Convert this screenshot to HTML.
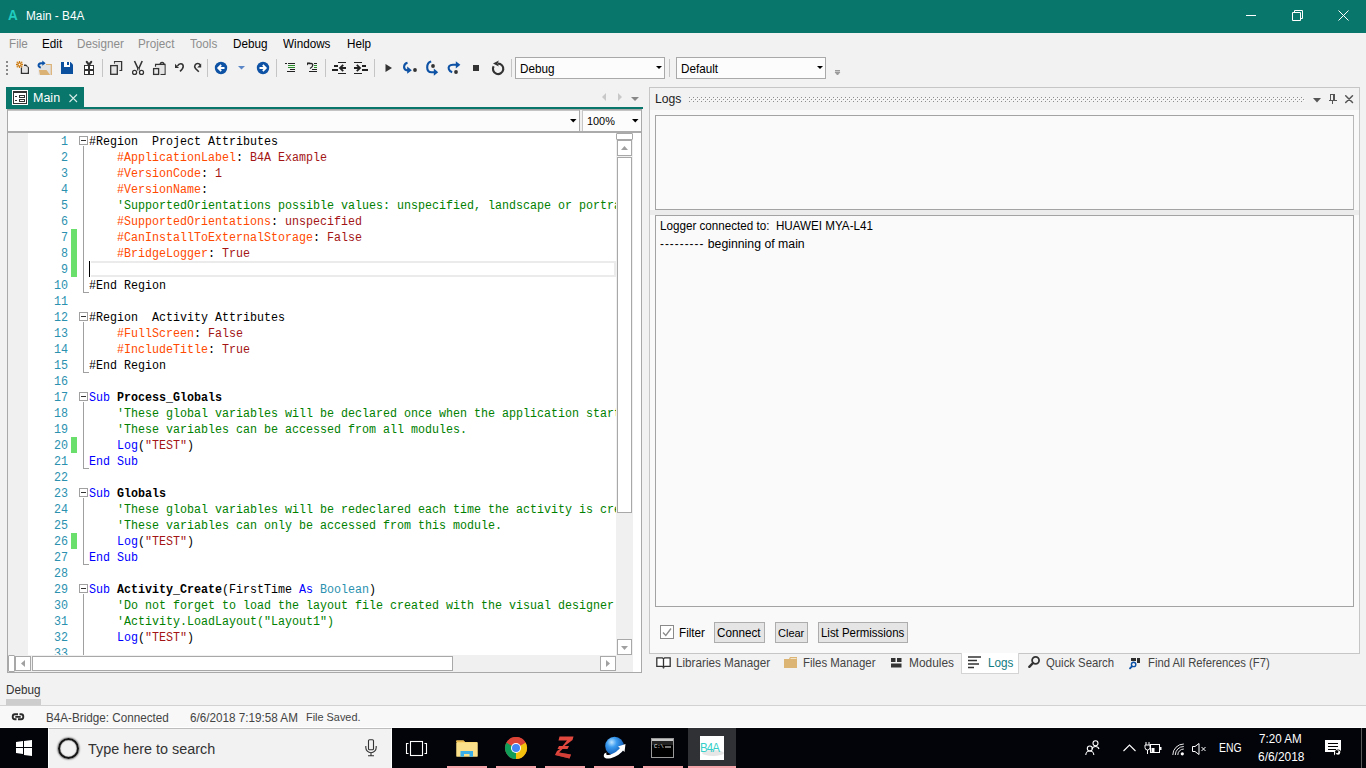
<!DOCTYPE html>
<html><head><meta charset="utf-8">
<style>
*{margin:0;padding:0;box-sizing:border-box}
html,body{width:1366px;height:768px;overflow:hidden;background:#f2f2f2;font-family:"Liberation Sans",sans-serif;}
.a{position:absolute}
.t{position:absolute;white-space:pre;line-height:1;font-size:11.7px;color:#000}
svg{position:absolute;overflow:visible}
#title{left:0;top:0;width:1366px;height:33px;background:#08766b}
.menu{color:#000}
.dis{color:#8d8d8d}
.sep{position:absolute;width:1px;top:59px;height:18px;background:#c5c5c5}
.combo{position:absolute;background:#fcfcfc;border:1px solid #a9a9a9}
/* editor */
#ed{left:7px;top:109px;width:635px;height:564px;border:1px solid #a9a9a9;border-top:1px solid #a9a9a9;background:#fff;overflow:hidden}
#code{position:absolute;left:81px;top:23px;width:564.6px;height:522px;overflow:hidden;transform:scaleX(0.93333);transform-origin:0 0}
.cl{position:absolute;left:0;height:16px;line-height:16px;white-space:pre;font-family:"Liberation Mono",monospace;font-size:12.5px;color:#000;padding-top:1px}
.ln{position:absolute;right:0;width:50px;text-align:right;height:16px;line-height:16px;font-family:"Liberation Mono",monospace;font-size:12.5px;color:#2b91af;padding-top:1px}
.k{color:#0000ff}.c{color:#008000}.d{color:#ff4a00}.s{color:#a31515}.b{font-weight:bold}.tp{color:#2b91af}
.t .c{color:#008000}
</style></head><body>
<!-- title bar -->
<div id="title" class="a"></div>
<div class="t" style="left:8px;top:7.5px;font-size:14.31px;transform:scaleX(0.9434);transform-origin:0 0;font-weight:bold;color:#20cdbf">A</div>
<div class="t" style="left:26px;top:10px;color:#fff;font-size:12.51px;transform:scaleX(0.9434);transform-origin:0 0">Main - B4A</div>
<div class="a" style="left:1246px;top:15px;width:10px;height:1px;background:#fff"></div>
<svg style="left:1292px;top:10px" width="11" height="11"><path d="M0.5 2.5h8v8h-8z M2.5 2.5v-2h8v8h-2" fill="none" stroke="#fff" stroke-width="1"/></svg>
<svg style="left:1338px;top:10px" width="11" height="11"><path d="M0.5 0.5L10.5 10.5M10.5 0.5L0.5 10.5" stroke="#fff" stroke-width="1"/></svg>

<!-- menu -->
<div class="t dis" style="font-size:12.40px;transform:scaleX(0.9434);transform-origin:0 0;left:9px;top:38px">File</div>
<div class="t menu" style="font-size:12.40px;transform:scaleX(0.9434);transform-origin:0 0;left:42px;top:38px">Edit</div>
<div class="t dis" style="font-size:12.40px;transform:scaleX(0.9434);transform-origin:0 0;left:77px;top:38px">Designer</div>
<div class="t dis" style="font-size:12.40px;transform:scaleX(0.9434);transform-origin:0 0;left:138px;top:38px">Project</div>
<div class="t dis" style="font-size:12.40px;transform:scaleX(0.9434);transform-origin:0 0;left:190px;top:38px">Tools</div>
<div class="t menu" style="font-size:12.40px;transform:scaleX(0.9434);transform-origin:0 0;left:233px;top:38px">Debug</div>
<div class="t menu" style="font-size:12.40px;transform:scaleX(0.9434);transform-origin:0 0;left:283px;top:38px">Windows</div>
<div class="t menu" style="font-size:12.40px;transform:scaleX(0.9434);transform-origin:0 0;left:347px;top:38px">Help</div>

<!-- toolbar -->

<div class="a" style="left:6px;top:61px;width:2px;height:2px;background:#8a8a8a"></div>
<div class="a" style="left:6px;top:65px;width:2px;height:2px;background:#8a8a8a"></div>
<div class="a" style="left:6px;top:69px;width:2px;height:2px;background:#8a8a8a"></div>
<div class="a" style="left:6px;top:73px;width:2px;height:2px;background:#8a8a8a"></div>
<!-- new/open/save/gift/copy/cut/paste/undo/redo -->
<svg style="left:0;top:0" width="210" height="80">
<path d="M21.5 67.5V73.3H28.3V67.8L25.8 65.3H24" stroke="#333" stroke-width="1.4" fill="#e4e4e4"/>
<rect x="22.2" y="66.5" width="5.4" height="6.1" fill="#e4e4e4"/>
<path d="M19.5 61v7M16 64.5h7" stroke="#cc7a10" stroke-width="1.3"/>
<circle cx="17.3" cy="62.3" r="0.8" fill="#cc7a10"/><circle cx="21.7" cy="62.3" r="0.8" fill="#cc7a10"/><circle cx="17.3" cy="66.7" r="0.8" fill="#cc7a10"/><circle cx="21.7" cy="66.7" r="0.8" fill="#cc7a10"/>
<circle cx="19.5" cy="64.5" r="1.6" fill="#fff" stroke="#cc7a10" stroke-width="1.2"/>
<rect x="38.5" y="64.3" width="13" height="10.6" fill="#e2e2e2"/>
<path d="M46 64.5H51.3V74.9" stroke="#dcb174" stroke-width="1.2" fill="none"/>
<path d="M39 70H46.5L50.2 74.9H40z" fill="#dcb174"/>
<path d="M40.8 67.6C37.8 67 37.6 63.6 41 63.2L43 63.2" stroke="#0b52a8" stroke-width="1.9" fill="none"/>
<path d="M42.3 60.6L45.6 63.2L42.3 65.8z" fill="#0b52a8"/>
<path d="M61 62H70.5L73 64.5V74H61z" fill="#0b4f9f"/>
<rect x="64" y="62" width="6" height="5" fill="#fff"/>
<rect x="67" y="62" width="2" height="3" fill="#0b4f9f"/>
<rect x="84" y="65" width="10" height="10" fill="#333"/>
<rect x="85" y="66" width="3" height="3" fill="#fff"/><rect x="90" y="66" width="3" height="3" fill="#fff"/>
<rect x="85" y="71" width="3" height="3" fill="#fff"/><rect x="90" y="71" width="3" height="3" fill="#fff"/>
<path d="M89 64.8L86.8 61.8M89 64.8L91.2 61.8" stroke="#333" stroke-width="2.2" stroke-linecap="round"/>
<path d="M114.6 63.8V61.6H121.6V70.4H119.4" stroke="#333" stroke-width="1.3" fill="none"/>
<rect x="114.8" y="62.2" width="6.2" height="7.6" fill="#e4e4e4"/>
<rect x="110.7" y="65.6" width="6.6" height="8.7" fill="#e4e4e4" stroke="#333" stroke-width="1.3"/>
<path d="M134.5 61L138 68.5M142.2 61L138.8 68.5" stroke="#333" stroke-width="1.6"/>
<path d="M137.6 68v2.5M139.2 68v2.5" stroke="#333" stroke-width="1"/>
<circle cx="134.6" cy="72.4" r="2" fill="#fff" stroke="#333" stroke-width="1.3"/>
<circle cx="141.5" cy="72.4" r="2" fill="#fff" stroke="#333" stroke-width="1.3"/>
<path d="M155.6 66.8V64.5H165V74.4H160.5" stroke="#333" stroke-width="1.3" fill="none"/>
<rect x="156.2" y="65.1" width="8.2" height="8.7" fill="#e4e4e4"/>
<path d="M160.3 64.3A1.8 1.8 0 0 1 163.9 64.3" stroke="#333" stroke-width="1.5" fill="none"/>
<rect x="153.6" y="68.6" width="5" height="5.8" fill="#ececec" stroke="#333" stroke-width="1.3"/>
<path d="M177.5 66C179 63 183.2 63 183.2 66.5C183.2 68.5 181.5 70 180 71.3" stroke="#333" stroke-width="1.6" fill="none"/>
<path d="M175 63.8V67.9H179z" fill="#333"/>
<path d="M198.8 71.8L195.5 68.5C193.5 66 195.5 63.5 197.8 63.5C199 63.5 199.8 64.2 200.3 65" stroke="#333" stroke-width="1.6" fill="none"/>
<path d="M201.2 63.5V67.6H197.2z" fill="#333"/>
</svg>
<div class="sep" style="left:102px"></div>
<div class="sep" style="left:207px"></div>
<!-- back -->
<svg style="left:214px;top:61px" width="14" height="14"><circle cx="7" cy="7" r="6.2" fill="#0d52a4"/><path d="M10.5 7h-6M7.2 4l-3 3l3 3" stroke="#fff" stroke-width="1.8" fill="none"/></svg>
<svg style="left:238px;top:66px" width="7" height="4"><path d="M0 0h7L3.5 3.5z" fill="#5a86c8"/></svg>
<!-- forward -->
<svg style="left:256px;top:61px" width="14" height="14"><circle cx="7" cy="7" r="6.2" fill="#0d52a4"/><path d="M3.5 7h6M6.8 4l3 3l-3 3" stroke="#fff" stroke-width="1.8" fill="none"/></svg>
<div class="sep" style="left:276px"></div>
<!-- comment / uncomment / outdent / indent -->
<svg style="left:0;top:0" width="380" height="80" shape-rendering="crispEdges">
<rect x="285" y="63" width="2" height="1.3" fill="#222"/>
<rect x="288" y="63" width="7" height="1.3" fill="#222"/>
<rect x="288" y="65" width="7" height="1.3" fill="#2a8f2a"/>
<rect x="288" y="67" width="7" height="1.3" fill="#2a8f2a"/>
<rect x="290" y="69" width="5" height="1.3" fill="#222"/>
<rect x="287" y="71" width="8" height="1.3" fill="#222"/>
<rect x="314" y="63" width="3" height="1.3" fill="#222"/>
<rect x="314" y="65" width="3" height="1.3" fill="#2a8f2a"/>
<rect x="314" y="67" width="3" height="1.3" fill="#2a8f2a"/>
<rect x="312" y="69" width="5" height="1.3" fill="#222"/>
<rect x="309" y="71" width="8" height="1.3" fill="#222"/>
</svg>
<svg style="left:0;top:0" width="380" height="80">
<path d="M308.5 63.5H311C313.5 63.5 313.5 66.5 310 68.5" stroke="#222" stroke-width="1.3" fill="none"/>
<path d="M307 62.5L310 62.5L307 65.5z" fill="#222"/>
</svg>
<svg style="left:0;top:0" width="380" height="80" shape-rendering="crispEdges">
<rect x="338" y="62" width="8" height="1.2" fill="#222"/>
<rect x="334" y="65" width="4" height="2" fill="#222"/>
<rect x="332" y="69" width="6" height="2" fill="#222"/>
<rect x="340" y="67" width="6" height="2" fill="#222"/>
<rect x="338" y="73" width="8" height="1.2" fill="#222"/>
<rect x="354" y="62" width="8" height="1.2" fill="#222"/>
<rect x="362" y="65" width="4" height="2" fill="#222"/>
<rect x="362" y="69" width="6" height="2" fill="#222"/>
<rect x="354" y="67" width="6" height="2" fill="#222"/>
<rect x="354" y="73" width="8" height="1.2" fill="#222"/>
</svg>
<svg style="left:0;top:0" width="380" height="80">
<path d="M343.2 64.8L340 68L343.2 71.2" stroke="#222" stroke-width="1.8" fill="none"/>
<path d="M356.8 64.8L360 68L356.8 71.2" stroke="#222" stroke-width="1.8" fill="none"/>
</svg>
<div class="sep" style="left:325px"></div>
<div class="sep" style="left:374px"></div>
<!-- play -->
<svg style="left:385px;top:63px" width="8" height="10"><path d="M0.5 1l6.5 4l-6.5 4z" fill="#333"/></svg>
<!-- step over / into / out -->
<svg style="left:0;top:0" width="500" height="80">
<path d="M407.5 62.8C403.5 63.8 402.8 68.6 406.5 70.3L409 70.3" stroke="#0d52a4" stroke-width="2.1" fill="none"/>
<path d="M407.2 66.6L411.8 70.2L407.2 73.8z" fill="#0d52a4"/>
<circle cx="415" cy="70" r="1.9" fill="#333"/>
<path d="M431.2 61.6C427.6 62.4 427.2 65.5 427.2 67.5C427.2 70.5 428.6 72.2 431.5 72.2L435 72.2" stroke="#0d52a4" stroke-width="2.1" fill="none"/>
<path d="M433.8 68.6L438.2 72.2L433.8 75.8z" fill="#0d52a4"/>
<circle cx="433" cy="66" r="1.9" fill="#333"/>
<path d="M452.2 72.3C448.6 71.2 448 67.8 449.2 66.2C450.2 64.9 451.5 64.8 453 64.8L457 64.8" stroke="#0d52a4" stroke-width="2.1" fill="none"/>
<path d="M455.8 61.2L460.4 64.8L455.8 68.4z" fill="#0d52a4"/>
<circle cx="456" cy="72" r="1.9" fill="#333"/>
</svg>
<!-- stop -->
<div class="a" style="left:473px;top:65px;width:6px;height:6px;background:#333"></div>
<!-- restart -->
<svg style="left:0;top:0" width="520" height="80"><path d="M493.6 66.2A5.2 5.2 0 1 0 498 63.6" stroke="#333" stroke-width="2.2" fill="none"/><path d="M493 63.4L498.8 60.4L497.6 63.6L498.8 66.6z" fill="#333"/></svg>
<div class="sep" style="left:511px"></div>

<div class="combo" style="left:515px;top:57px;width:150px;height:22px"></div>
<div class="t" style="font-size:12.40px;transform:scaleX(0.9434);transform-origin:0 0;left:520px;top:63px">Debug</div>
<svg style="left:656px;top:66px" width="6" height="4"><path d="M0 0h6L3 3z" fill="#000"/></svg>
<div class="sep" style="left:669px"></div>
<div class="combo" style="left:676px;top:57px;width:150px;height:22px"></div>
<div class="t" style="font-size:12.40px;transform:scaleX(0.9434);transform-origin:0 0;left:681px;top:63px">Default</div>
<svg style="left:817px;top:66px" width="6" height="4"><path d="M0 0h6L3 3z" fill="#000"/></svg>
<svg style="left:835px;top:70px" width="6" height="6"><path d="M0 0.5h5M0 2h5L2.5 5z" stroke="#9a9a9a" stroke-width="1" fill="#9a9a9a"/></svg>

<!-- document tab -->
<div class="a" style="left:6px;top:87px;width:78px;height:20px;background:#08766b"></div>
<div class="a" style="left:6px;top:107px;width:637px;height:2px;background:#08766b"></div>
<svg style="left:12px;top:90px" width="16" height="15"><rect x="0" y="0" width="16" height="15" fill="#fff"/><rect x="1" y="1" width="14" height="13" fill="#333"/><rect x="2" y="3" width="12" height="10" fill="#fff"/><rect x="3" y="6" width="2" height="1" fill="#333"/><rect x="3" y="10" width="2" height="1" fill="#333"/><rect x="7.5" y="5.5" width="5" height="2" fill="none" stroke="#333" stroke-width="1"/><rect x="7.5" y="9.5" width="5" height="2" fill="none" stroke="#333" stroke-width="1"/></svg>
<div class="t" style="left:33px;top:91px;color:#fff;font-size:13.25px;transform:scaleX(0.9434);transform-origin:0 0">Main</div>
<svg style="left:69px;top:94px" width="9" height="9"><path d="M0.5 0.5L8 8M8 0.5L0.5 8" stroke="#d6ece8" stroke-width="1.1"/></svg>
<svg style="left:601px;top:93px" width="6" height="9"><path d="M5 0v8L1 4z" fill="#c8c8c8"/></svg>
<svg style="left:617px;top:93px" width="6" height="9"><path d="M1 0v8L5 4z" fill="#c8c8c8"/></svg>
<svg style="left:631px;top:97px" width="9" height="5"><path d="M0 0h8L4 4z" fill="#888"/></svg>

<!-- editor -->
<div id="ed" class="a">
  <!-- header combos -->
  <div class="a" style="left:0;top:0;width:571px;height:21px;background:#fcfcfc"></div>
  <div class="a" style="left:574px;top:0;width:59px;height:21px;background:#fcfcfc;border-left:1px solid #c6c6c6"></div>
  <div class="a" style="left:0;top:21px;width:633px;height:2px;background:#ababab"></div>
  <div class="a" style="left:0;top:0;width:633px;height:1px;background:#c4c4c4"></div>
  <div class="a" style="left:571px;top:0;width:1px;height:21px;background:#a9a9a9"></div>
  <div class="a" style="left:572px;top:0;width:2px;height:21px;background:#f0f0f0"></div>
  <svg style="left:562px;top:9px" width="7" height="4"><path d="M0 0h6.5L3.25 3.5z" fill="#000"/></svg>
  <div class="t" style="left:579px;top:6px;font-size:11.55px;transform:scaleX(0.9434);transform-origin:0 0">100%</div>
  <svg style="left:624px;top:9px" width="7" height="4"><path d="M0 0h6.5L3.25 3.5z" fill="#000"/></svg>
  <!-- gutter -->
  <div class="a" style="left:0;top:23px;width:20px;height:522px;background:#f0f0f0"></div>
  <div class="a" style="left:0;top:23px;width:60px;height:522px;overflow:hidden;transform:scaleX(0.93333);transform-origin:100% 0"><div class="ln" style="top:0px">1</div>
<div class="ln" style="top:16px">2</div>
<div class="ln" style="top:32px">3</div>
<div class="ln" style="top:48px">4</div>
<div class="ln" style="top:64px">5</div>
<div class="ln" style="top:80px">6</div>
<div class="ln" style="top:96px">7</div>
<div class="ln" style="top:112px">8</div>
<div class="ln" style="top:128px">9</div>
<div class="ln" style="top:144px">10</div>
<div class="ln" style="top:160px">11</div>
<div class="ln" style="top:176px">12</div>
<div class="ln" style="top:192px">13</div>
<div class="ln" style="top:208px">14</div>
<div class="ln" style="top:224px">15</div>
<div class="ln" style="top:240px">16</div>
<div class="ln" style="top:256px">17</div>
<div class="ln" style="top:272px">18</div>
<div class="ln" style="top:288px">19</div>
<div class="ln" style="top:304px">20</div>
<div class="ln" style="top:320px">21</div>
<div class="ln" style="top:336px">22</div>
<div class="ln" style="top:352px">23</div>
<div class="ln" style="top:368px">24</div>
<div class="ln" style="top:384px">25</div>
<div class="ln" style="top:400px">26</div>
<div class="ln" style="top:416px">27</div>
<div class="ln" style="top:432px">28</div>
<div class="ln" style="top:448px">29</div>
<div class="ln" style="top:464px">30</div>
<div class="ln" style="top:480px">31</div>
<div class="ln" style="top:496px">32</div>
<div class="ln" style="top:512px">33</div></div>
  <!-- change bars -->
  <div class="a" style="left:63px;top:119px;width:6px;height:48px;background:#6bdf6b"></div>
  <div class="a" style="left:63px;top:327px;width:6px;height:16px;background:#6bdf6b"></div>
  <div class="a" style="left:63px;top:423px;width:6px;height:16px;background:#6bdf6b"></div>
  <div class="a" style="left:71px;top:26px;width:9px;height:9px;border:1px solid #a0a0a0;background:#fff"></div><div class="a" style="left:73px;top:30px;width:5px;height:1px;background:#333"></div>
<div class="a" style="left:75px;top:36px;width:1px;height:146px;background:#a0a0a0"></div><div class="a" style="left:75px;top:182px;width:6px;height:1px;background:#a0a0a0"></div>
<div class="a" style="left:71px;top:202px;width:9px;height:9px;border:1px solid #a0a0a0;background:#fff"></div><div class="a" style="left:73px;top:206px;width:5px;height:1px;background:#333"></div>
<div class="a" style="left:75px;top:212px;width:1px;height:50px;background:#a0a0a0"></div><div class="a" style="left:75px;top:262px;width:6px;height:1px;background:#a0a0a0"></div>
<div class="a" style="left:71px;top:282px;width:9px;height:9px;border:1px solid #a0a0a0;background:#fff"></div><div class="a" style="left:73px;top:286px;width:5px;height:1px;background:#333"></div>
<div class="a" style="left:75px;top:292px;width:1px;height:66px;background:#a0a0a0"></div><div class="a" style="left:75px;top:358px;width:6px;height:1px;background:#a0a0a0"></div>
<div class="a" style="left:71px;top:378px;width:9px;height:9px;border:1px solid #a0a0a0;background:#fff"></div><div class="a" style="left:73px;top:382px;width:5px;height:1px;background:#333"></div>
<div class="a" style="left:75px;top:388px;width:1px;height:66px;background:#a0a0a0"></div><div class="a" style="left:75px;top:454px;width:6px;height:1px;background:#a0a0a0"></div>
<div class="a" style="left:71px;top:474px;width:9px;height:9px;border:1px solid #a0a0a0;background:#fff"></div><div class="a" style="left:73px;top:478px;width:5px;height:1px;background:#333"></div>
<div class="a" style="left:75px;top:484px;width:1px;height:61px;background:#a0a0a0"></div>
  <!-- current line -->
  <div class="a" style="left:83px;top:151px;width:525px;height:16px;border:2px solid #ebebeb;border-left:none"></div>
  <div class="a" style="left:81px;top:151px;width:1px;height:16px;background:#000"></div>
  <div id="code"><div class="cl" style="top:0px">#Region  Project Attributes</div>
<div class="cl" style="top:16px">    <span class="d">#ApplicationLabel</span>: <span class="s">B4A Example</span></div>
<div class="cl" style="top:32px">    <span class="d">#VersionCode</span>: <span class="s">1</span></div>
<div class="cl" style="top:48px">    <span class="d">#VersionName</span>: </div>
<div class="cl" style="top:64px">    <span class="c">&#x27;SupportedOrientations possible values: unspecified, landscape or portrait.</span></div>
<div class="cl" style="top:80px">    <span class="d">#SupportedOrientations</span>: <span class="s">unspecified</span></div>
<div class="cl" style="top:96px">    <span class="d">#CanInstallToExternalStorage</span>: <span class="s">False</span></div>
<div class="cl" style="top:112px">    <span class="d">#BridgeLogger</span>: <span class="s">True</span></div>
<div class="cl" style="top:128px"></div>
<div class="cl" style="top:144px">#End Region</div>
<div class="cl" style="top:160px"></div>
<div class="cl" style="top:176px">#Region  Activity Attributes</div>
<div class="cl" style="top:192px">    <span class="d">#FullScreen</span>: <span class="s">False</span></div>
<div class="cl" style="top:208px">    <span class="d">#IncludeTitle</span>: <span class="s">True</span></div>
<div class="cl" style="top:224px">#End Region</div>
<div class="cl" style="top:240px"></div>
<div class="cl" style="top:256px"><span class="k">Sub</span> <span class="b">Process_Globals</span></div>
<div class="cl" style="top:272px">    <span class="c">&#x27;These global variables will be declared once when the application starts.</span></div>
<div class="cl" style="top:288px">    <span class="c">&#x27;These variables can be accessed from all modules.</span></div>
<div class="cl" style="top:304px">    <span class="k">Log</span>(<span class="s">&quot;TEST&quot;</span>)</div>
<div class="cl" style="top:320px"><span class="k">End Sub</span></div>
<div class="cl" style="top:336px"></div>
<div class="cl" style="top:352px"><span class="k">Sub</span> <span class="b">Globals</span></div>
<div class="cl" style="top:368px">    <span class="c">&#x27;These global variables will be redeclared each time the activity is created.</span></div>
<div class="cl" style="top:384px">    <span class="c">&#x27;These variables can only be accessed from this module.</span></div>
<div class="cl" style="top:400px">    <span class="k">Log</span>(<span class="s">&quot;TEST&quot;</span>)</div>
<div class="cl" style="top:416px"><span class="k">End Sub</span></div>
<div class="cl" style="top:432px"></div>
<div class="cl" style="top:448px"><span class="k">Sub</span> <span class="b">Activity_Create</span>(FirstTime <span class="k">As</span> <span class="tp">Boolean</span>)</div>
<div class="cl" style="top:464px">    <span class="c">&#x27;Do not forget to load the layout file created with the visual designer. For example:</span></div>
<div class="cl" style="top:480px">    <span class="c">&#x27;Activity.LoadLayout(&quot;Layout1&quot;)</span></div>
<div class="cl" style="top:496px">    <span class="k">Log</span>(<span class="s">&quot;TEST&quot;</span>)</div>
<div class="cl" style="top:512px"></div></div>
  <!-- vertical scrollbar -->
  <div class="a" style="left:608px;top:23px;width:17px;height:539px;background:#f0f0f0"></div>
  <div class="a" style="left:608px;top:23px;width:17px;height:7px;background:#fff;border:1px solid #a8a8a8;border-radius:1px"></div>
  <div class="a" style="left:609px;top:30px;width:15px;height:16px;background:#fff;border:1px solid #a8a8a8"></div>
  <svg style="left:613px;top:36px" width="7" height="4"><path d="M0 4h7L3.5 0z" fill="#a0a0a0"/></svg>
  <div class="a" style="left:609px;top:47px;width:15px;height:356px;background:#fff;border:1px solid #a8a8a8"></div>
  <div class="a" style="left:609px;top:529px;width:15px;height:16px;background:#fff;border:1px solid #a8a8a8"></div>
  <svg style="left:613px;top:536px" width="7" height="4"><path d="M0 0h7L3.5 4z" fill="#a0a0a0"/></svg>
  <!-- horizontal scrollbar -->
  <div class="a" style="left:0;top:545px;width:608px;height:17px;background:#f0f0f0"></div>
  <div class="a" style="left:0;top:545px;width:7px;height:17px;background:#fff;border:1px solid #a8a8a8;border-radius:1px"></div>
  <div class="a" style="left:7px;top:546px;width:16px;height:15px;background:#fff;border:1px solid #a8a8a8"></div>
  <svg style="left:13px;top:550px" width="4" height="7"><path d="M4 0v7L0 3.5z" fill="#a0a0a0"/></svg>
  <div class="a" style="left:24px;top:546px;width:421px;height:15px;background:#fff;border:1px solid #a8a8a8"></div>
  <div class="a" style="left:592px;top:546px;width:16px;height:15px;background:#fff;border:1px solid #a8a8a8"></div>
  <svg style="left:598px;top:550px" width="4" height="7"><path d="M0 0v7L4 3.5z" fill="#a0a0a0"/></svg>
</div>

<!-- logs panel -->
<div class="a" style="left:649px;top:87px;width:711px;height:567px;background:#f9f9f9;border:1px solid #c6c6c6"></div>
<div class="a" style="left:650px;top:88px;width:709px;height:22px;background:#f2f2f2"></div>
<div class="t" style="left:655px;top:93px;font-size:12.93px;transform:scaleX(0.9434);transform-origin:0 0;color:#222">Logs</div>
<svg style="left:689px;top:97px" width="616" height="5"><defs><pattern id="dp" x="0" y="0" width="4" height="4" patternUnits="userSpaceOnUse"><rect x="0" y="0" width="1" height="1" fill="#8e8e8e"/><rect x="2" y="2" width="1" height="1" fill="#8e8e8e"/><rect x="1" y="1" width="1" height="1" fill="#fbfbfb"/><rect x="3" y="3" width="1" height="1" fill="#fbfbfb"/></pattern></defs><rect x="0" y="0" width="616" height="5" fill="url(#dp)"/></svg>
<svg style="left:1313px;top:98px" width="9" height="5"><path d="M0 0h8L4 4.5z" fill="#555"/></svg>
<svg style="left:1329px;top:94px" width="8" height="10"><rect x="1" y="0" width="5" height="1" fill="#555"/><rect x="1" y="0" width="1" height="7" fill="#555"/><rect x="4" y="0" width="2" height="7" fill="#555"/><rect x="0" y="6" width="8" height="1" fill="#555"/><rect x="3" y="7" width="1" height="3" fill="#555"/></svg>
<svg style="left:1345px;top:95px" width="9" height="9"><path d="M0.7 0.7L7.5 7.5M7.5 0.7L0.7 7.5" stroke="#555" stroke-width="1.5" stroke-linecap="round"/></svg>
<div class="a" style="left:655px;top:115px;width:699px;height:95px;background:#fafafa;border:1px solid #a3a3a3;border-right-color:#b8b8b8"></div>
<div class="a" style="left:650px;top:210px;width:709px;height:5px;background:#ececec"></div>
<div class="a" style="left:655px;top:215px;width:699px;height:392px;background:#fafafa;border:1px solid #a3a3a3"></div>
<div class="t" style="left:660px;top:220px;font-size:12.35px;transform:scaleX(0.9434);transform-origin:0 0">Logger connected to:  HUAWEI MYA-L41</div>
<div class="t" style="left:660px;top:237px;font-size:12.35px;transform:scaleX(0.9434);transform-origin:0 0"><span style="letter-spacing:0.09em">---------</span><span style="font-size:1.0558em"> beginning of main</span></div>
<!-- filter row -->
<div class="a" style="left:660px;top:625px;width:14px;height:14px;background:#fff;border:1px solid #8a8a8a"></div>
<svg style="left:662px;top:628px" width="10" height="9"><path d="M1 4.5L3.8 7.5L9 0.5" stroke="#8a8a8a" stroke-width="1.3" fill="none"/></svg>
<div class="t" style="font-size:12.40px;transform:scaleX(0.9434);transform-origin:0 0;left:679px;top:627px">Filter</div>
<div class="a" style="left:714px;top:622px;width:51px;height:21px;background:#e5e5e5;border:1px solid #adadad"></div>
<div class="t" style="font-size:12.40px;transform:scaleX(0.9434);transform-origin:0 0;left:717px;top:627px">Connect</div>
<div class="a" style="left:775px;top:622px;width:33px;height:21px;background:#e5e5e5;border:1px solid #adadad"></div>
<div class="t" style="left:778px;top:626.5px;font-size:11.66px;transform:scaleX(0.9434);transform-origin:0 0">Clear</div>
<div class="a" style="left:818px;top:622px;width:90px;height:21px;background:#e5e5e5;border:1px solid #adadad"></div>
<div class="t" style="left:821px;top:627px;font-size:12.14px;transform:scaleX(0.9434);transform-origin:0 0">List Permissions</div>

<!-- bottom tabs -->

<div class="a" style="left:961px;top:653px;width:58px;height:21px;background:#fff;border:1px solid #d4d4d4;border-top:none"></div>
<svg style="left:656px;top:657px" width="15" height="11"><path d="M0.8 0.8h5.5l1.2 1v8.4l-1.2 -0.8h-5.5z M14.2 0.8h-5.5l-1.2 1v8.4l1.2 -0.8h5.5z" fill="#fff" stroke="#333" stroke-width="1.3"/></svg>
<div class="t" style="font-size:12.40px;transform:scaleX(0.9434);transform-origin:0 0;left:676px;top:657px;color:#444">Libraries Manager</div>
<svg style="left:784px;top:657px" width="14" height="12"><path d="M0 2H5L6 0H13V11H0z" fill="#dcb474"/><rect x="6.5" y="1" width="6" height="1" fill="#f3e3c6"/></svg>
<div class="t" style="left:803px;top:657px;color:#444;font-size:12.14px;transform:scaleX(0.9434);transform-origin:0 0">Files Manager</div>
<svg style="left:891px;top:658px" width="11" height="10"><rect x="0" y="0" width="4.5" height="4" fill="#333"/><rect x="6" y="0" width="4.5" height="4" fill="#333"/><rect x="0" y="5.5" width="10.5" height="4" fill="#333"/></svg>
<div class="t" style="left:909px;top:657px;color:#444;font-size:12.61px;transform:scaleX(0.9434);transform-origin:0 0">Modules</div>
<svg style="left:968px;top:656px" width="14" height="14"><path d="M0 1h13M0 4.5h9M0 8h11M0 11.5h6" stroke="#333" stroke-width="1.6"/></svg>
<div class="t" style="font-size:12.40px;transform:scaleX(0.9434);transform-origin:0 0;left:988px;top:657px;color:#117c82">Logs</div>
<svg style="left:1020px;top:652px" width="26" height="20"><circle cx="15.6" cy="8.3" r="3.5" fill="none" stroke="#333" stroke-width="1.8"/><path d="M13 11L9.3 14.8" stroke="#333" stroke-width="2.4" stroke-linecap="round"/></svg>
<div class="t" style="left:1046px;top:657px;color:#444;font-size:12.03px;transform:scaleX(0.9434);transform-origin:0 0">Quick Search</div>
<svg style="left:1120px;top:652px" width="24" height="20"><rect x="11" y="6" width="5" height="3" fill="#2e2e2e"/><rect x="17" y="6" width="3" height="5" fill="#2e2e2e"/><circle cx="13.6" cy="12.4" r="2.2" fill="none" stroke="#0b52a8" stroke-width="1.4"/><path d="M11.9 14.3L10 16.4" stroke="#0b52a8" stroke-width="1.8" stroke-linecap="round"/></svg>
<div class="t" style="left:1148px;top:657px;color:#444;font-size:11.98px;transform:scaleX(0.9434);transform-origin:0 0">Find All References (F7)</div>


<!-- debug label -->
<div class="t" style="font-size:12.40px;transform:scaleX(0.9434);transform-origin:0 0;left:6px;top:684px;color:#333">Debug</div>
<div class="a" style="left:6px;top:699px;width:35px;height:6px;background:#cdcdcd"></div>
<div class="a" style="left:0;top:705px;width:1366px;height:1px;background:#d2d2d2"></div>
<div class="a" style="left:0;top:706px;width:1366px;height:22px;background:#f8f8f8;border-bottom:1px solid #fff"></div>
<svg style="left:0;top:700px" width="30" height="28"><path d="M18 14.3H14.8C12 14.3 12 19.2 14.8 19.2H16.5M18 19.2H21.2C24 19.2 24 14.3 21.2 14.3H19.5M15.3 16.9H20.7" stroke="#2a2a2a" stroke-width="1.9" fill="none"/></svg>
<div class="t" style="font-size:12.40px;transform:scaleX(0.9434);transform-origin:0 0;left:46px;top:712px;color:#444">B4A-Bridge: Connected</div>
<div class="t" style="font-size:12.40px;transform:scaleX(0.9434);transform-origin:0 0;left:190px;top:712px;color:#444">6/6/2018 7:19:58 AM</div>
<div class="t" style="left:306px;top:712px;color:#444;font-size:11.55px;transform:scaleX(0.9434);transform-origin:0 0">File Saved.</div>

<!-- taskbar -->

<div class="a" style="left:0;top:728px;width:1366px;height:40px;background:#03040a"></div>
<svg style="left:16px;top:740px" width="17" height="17"><path d="M0 2L7 1V7H0z M8 1L16 0V7H8z M0 8H7V14L0 13z M8 8H16V16L8 15z" fill="#fff"/></svg>
<div class="a" style="left:48px;top:728px;width:344px;height:40px;background:#f2f2f2;border-left:1px solid #fff;border-right:1px solid #fff;border-top:1px solid #bdbdbd"></div>
<div class="a" style="left:57.5px;top:737.5px;width:21px;height:21px;border-radius:50%;border:2.6px solid #141414;box-shadow:0 0 1.5px 0.8px #8a8a8a, inset 0 0 1px 0.5px #8a8a8a"></div>
<div class="t" style="left:88px;top:741px;font-size:15.26px;transform:scaleX(0.9434);transform-origin:0 0;color:#333">Type here to search</div>
<svg style="left:365px;top:739px" width="12" height="18"><rect x="3.5" y="0.8" width="5" height="10" rx="1" fill="none" stroke="#333" stroke-width="1.1"/><path d="M0.8 7v1.5a5.2 5.2 0 0 0 10.4 0v-1.5M6 13.7v2.8M3 16.8h6" stroke="#333" stroke-width="1.1" fill="none"/></svg>
<svg style="left:406px;top:741px" width="21" height="15"><rect x="4.5" y="0.5" width="12" height="14" fill="none" stroke="#fff" stroke-width="1.1"/><path d="M2.5 2.5h-2v10h2M18.5 2.5h2v10h-2" fill="none" stroke="#fff" stroke-width="1.1"/></svg>
<!-- explorer -->
<svg style="left:456px;top:739px" width="22" height="18"><path d="M0.5 1.5h7l1.5 1.5h12.5v14.5h-21z" fill="#f8d775"/><path d="M0.5 1.5h7l1.5 1.5h-9z" fill="#e8b64b"/><rect x="0.5" y="4" width="21" height="13.5" fill="#fbe08c"/><path d="M4.5 17.8v-5.8h12.5v5.8h-3.5v-2.8h-5.5v2.8z" fill="#3aaee8"/></svg>
<!-- chrome -->
<svg style="left:505px;top:737px" width="22" height="22"><circle cx="11" cy="11" r="11" fill="#db4437"/><path d="M11 11L1.47 5.5A11 11 0 0 0 11 22z" fill="#0f9d58"/><path d="M11 11L11 22A11 11 0 0 0 20.53 5.5z" fill="#f4c20d"/><path d="M11 11L20.53 5.5A11 11 0 0 0 1.47 5.5z" fill="#db4437"/><circle cx="11" cy="11" r="5" fill="#fff"/><circle cx="11" cy="11" r="4" fill="#4285f4"/></svg>
<!-- z -->
<svg style="left:553px;top:735px" width="22" height="25"><path d="M6.5 1.5L20.5 1.5L19.5 5L11.5 11L16 11L14.5 14L9.5 14L6 17.5L18 19.5L16.5 23.5L2 20L4 16L7 14L4.5 14L6 11L9.5 11L14 5.5L5.5 5.5z" fill="#e2483e"/><path d="M6 17.5L18 19.5L16.5 23.5L2 20z" fill="#c93a33" opacity="0.6"/></svg>
<!-- globe -->
<svg style="left:602px;top:736px" width="25" height="24"><defs><radialGradient id="gg" cx="0.35" cy="0.3" r="0.75"><stop offset="0" stop-color="#bfe4ff"/><stop offset="0.35" stop-color="#3b9cf0"/><stop offset="1" stop-color="#0a4fa8"/></radialGradient></defs><circle cx="12.5" cy="10" r="9.3" fill="url(#gg)"/><path d="M2.5 17.5C0.5 21 3 23 7 22.5C12 22 18 18.5 21 14.5L22.5 16L23.5 8L16 10.5L18 12C15.5 15 11 18.5 6.5 19C4.5 19.2 3.8 18.5 4.5 16.5z" fill="#fff"/></svg>
<!-- cmd -->
<svg style="left:651px;top:738px" width="23" height="20"><rect x="0.5" y="0.5" width="22" height="19" fill="#000" stroke="#9a9a9a" stroke-width="1"/><rect x="1" y="1" width="21" height="2" fill="#c8c8c8"/><rect x="1" y="3" width="21" height="4" fill="#3a3a3a" opacity="0.6"/><text x="3" y="9.5" font-family="Liberation Mono" font-size="5.5" fill="#e8e8e8">C:\</text><rect x="14" y="8.5" width="6" height="1" fill="#e8e8e8"/></svg>
<!-- active b4a -->
<div class="a" style="left:688px;top:728px;width:48px;height:40px;background:#2f3135"></div>
<div class="a" style="left:700px;top:736px;width:24px;height:24px;background:#fff"></div>
<div class="a" style="left:702px;top:750px;width:22px;height:6px;border-radius:50%;background:#e6e6e6"></div>
<div class="t" style="left:700px;top:742px;font-size:12.19px;transform:scaleX(0.9434);transform-origin:0 0;color:#35cfc9;letter-spacing:-0.9px">B4A</div>
<!-- indicators -->
<div class="a" style="left:447px;top:766px;width:40px;height:2px;background:#f4a3a8"></div>
<div class="a" style="left:496px;top:766px;width:40px;height:2px;background:#f4a3a8"></div>
<div class="a" style="left:545px;top:766px;width:40px;height:2px;background:#f4a3a8"></div>
<div class="a" style="left:594px;top:766px;width:40px;height:2px;background:#f4a3a8"></div>
<div class="a" style="left:643px;top:766px;width:40px;height:2px;background:#f4a3a8"></div>
<div class="a" style="left:688px;top:766px;width:48px;height:2px;background:#f4a3a8"></div>
<!-- tray -->
<svg style="left:1085px;top:740px" width="16" height="16"><circle cx="10.5" cy="3.2" r="2.5" fill="none" stroke="#fff" stroke-width="1.1"/><path d="M7 9a3.7 3.7 0 0 1 7 0" stroke="#fff" stroke-width="1.1" fill="none"/><circle cx="4.8" cy="8.5" r="2.5" fill="none" stroke="#fff" stroke-width="1.1"/><path d="M0.8 15a4 4 0 0 1 8 0" stroke="#fff" stroke-width="1.1" fill="none"/></svg>
<svg style="left:1123px;top:744px" width="13" height="8"><path d="M0.5 7l6 -6l6 6" stroke="#fff" stroke-width="1.1" fill="none"/></svg>
<svg style="left:1145px;top:742px" width="17" height="12"><path d="M1 0v3M4 0v3M0 3h5v2.5a2.5 2.5 0 0 1 -5 0z M2.5 8v4" stroke="#fff" stroke-width="1" fill="none"/><rect x="5.5" y="2.5" width="9" height="8" fill="none" stroke="#fff"/><rect x="15" y="5" width="1.5" height="3" fill="#fff"/><rect x="6.5" y="6" width="3" height="4" fill="#fff"/></svg>
<svg style="left:1172px;top:743px" width="13" height="13"><path d="M0.8 12a11 11 0 0 1 11 -11M3.3 12a8.5 8.5 0 0 1 8.5 -8.5M5.8 12a6 6 0 0 1 6 -6" stroke="#fff" stroke-width="0.9" fill="none"/><circle cx="10.3" cy="10.8" r="1.6" fill="#fff"/></svg>
<svg style="left:1192px;top:743px" width="16" height="12"><path d="M0.5 3.5h2.5l4 -3v11l-4 -3h-2.5z" fill="none" stroke="#fff" stroke-width="1"/><path d="M9.5 4l4 4M13.5 4l-4 4" stroke="#fff" stroke-width="1"/></svg>
<div class="t" style="left:1219px;top:742px;font-size:10.4px;color:#fff;transform:scaleY(1.2);transform-origin:0 0">ENG</div>
<div class="t" style="left:1259px;top:733px;font-size:12.30px;transform:scaleX(0.9434);transform-origin:0 0;color:#fff">7:20 AM</div>
<div class="t" style="left:1258px;top:751px;font-size:12.67px;transform:scaleX(0.9434);transform-origin:0 0;color:#fff">6/6/2018</div>
<svg style="left:1325px;top:740px" width="17" height="17"><path d="M0 0H16V12H12L9 15.5V12H0z" fill="#fff"/><path d="M3 3.5H13M3 6.5H13M3 9.5H11" stroke="#000" stroke-width="1"/><circle cx="13" cy="12.5" r="3" fill="#000"/><circle cx="13" cy="12.5" r="2.2" fill="#fff"/><circle cx="12" cy="11.8" r="1.4" fill="#000"/></svg>
<div class="a" style="left:1361px;top:728px;width:1px;height:40px;background:#5a5a5a"></div>

</body></html>
